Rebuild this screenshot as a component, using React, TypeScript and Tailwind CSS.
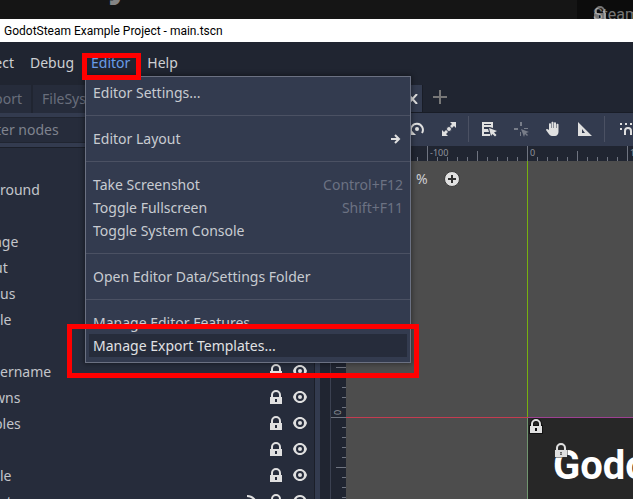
import React from "react";

type IconProps = { className?: string };

function LockIcon({ className = "" }: IconProps) {
  return (
    <svg viewBox="0 0 16 16" className={`size-4 shrink-0 ${className}`} fill="#e0e0e0" aria-hidden="true">
      <path fillRule="evenodd" d="M8 1a5 5 0 0 0-5 5v2H2v7h12V8h-1V6a5 5 0 0 0-5-5zm0 2a3 3 0 0 1 3 3v2H5V6a3 3 0 0 1 3-3zM7 10h2v3H7z" />
    </svg>
  );
}

function EyeIcon() {
  return (
    <svg viewBox="0 0 16 16" className="size-4 shrink-0" fill="#e0e0e0" aria-hidden="true">
      <path fillRule="evenodd" d="M8 2C4.500 2 2 4.500 1 8c1 3.500 3.500 6 7 6s6-2.500 7-6c-1-3.500-3.500-6-7-6zm0 2a4 4 0 1 1 0 8 4 4 0 0 1 0-8z" />
      <circle cx="8" cy="8" r="2" />
    </svg>
  );
}

function SignalIcon() {
  return (
    <svg viewBox="0 0 16 16" className="size-4 shrink-0" fill="none" stroke="#e0e0e0" strokeWidth="2" aria-hidden="true">
      <path d="M3 3a10 10 0 0 1 10 10M3 7a6 6 0 0 1 6 6" />
      <circle cx="4" cy="12" r="1" />
    </svg>
  );
}

function ToolIcon({ children, className = "" }: { children: React.ReactNode; className?: string }) {
  return (
    <svg viewBox="0 0 16 16" className={`size-4 shrink-0 ${className}`} fill="#e0e0e0" aria-hidden="true">
      {children}
    </svg>
  );
}

function ToolButton({ label, children }: { label: string; children: React.ReactNode }) {
  return (
    <button type="button" aria-label={label} className="flex h-full w-8 shrink-0 items-center justify-center">
      {children}
    </button>
  );
}

function ToolSeparator() {
  return (
    <div className="flex h-full w-2 shrink-0 py-[3px] pl-[3px]">
      <div className="w-px bg-[#4b5163]" />
    </div>
  );
}

type Entry = { label: string; shortcut?: string; submenu?: boolean; active?: boolean } | null;

const entries: Entry[] = [
  { label: "Editor Settings..." },
  null,
  { label: "Editor Layout", submenu: true },
  null,
  { label: "Take Screenshot", shortcut: "Control+F12" },
  { label: "Toggle Fullscreen", shortcut: "Shift+F11" },
  { label: "Toggle System Console" },
  null,
  { label: "Open Editor Data/Settings Folder" },
  null,
  { label: "Manage Editor Features..." },
  { label: "Manage Export Templates...", active: true },
];

function EditorPopup() {
  return (
    <div className="absolute top-[34px] left-0.5 z-20 w-[326px] border border-[#6b7182] bg-[#333b4f] pt-1 pb-[5px] shadow-[0_0_5px_1px_rgba(0,0,0,0.4)]">
      {entries.map((entry, i) =>
        entry ? (
          <div key={i} className="px-[3px]">
            <button
              type="button"
              className={`flex h-[23px] w-full items-center justify-between pr-1 pl-1 whitespace-nowrap ${
                entry.active ? "bg-[#262c3b] text-[#e0e1e4]" : "text-[#c8cbd1]"
              }`}
            >
              <span>{entry.label}</span>
              {entry.shortcut && <span className="text-[#6c7283]">{entry.shortcut}</span>}
              {entry.submenu && (
                <svg viewBox="0 0 16 16" className="size-4" fill="none" stroke="#e0e0e0" strokeWidth="2" aria-hidden="true">
                  <path d="M4 8h8M8 4l4 4-4 4" />
                </svg>
              )}
            </button>
          </div>
        ) : (
          <div key={i} className="flex h-[23px] items-center">
            <div className="h-px w-full bg-[#4b5163]" />
          </div>
        ),
      )}
      <div className="pointer-events-none absolute -right-[9px] -bottom-4 -left-[19px] h-[54px] border-[5px] border-[#ff0000]" />
    </div>
  );
}

function MenuBar() {
  return (
    <nav className="flex h-[42px] shrink-0 items-center gap-px bg-[#202531] text-[#cdcfd2]">
      <button type="button" className="flex w-[21px] justify-end overflow-hidden pr-[7px]">ect</button>
      <button type="button" className="px-2">Debug</button>
      <div className="relative flex h-full items-center">
        <button type="button" aria-expanded="true" className="px-2 text-[#699ce8]">Editor</button>
        <div className="pointer-events-none absolute top-[11px] -left-px z-30 h-[27px] w-[59px] border-[5px] border-[#ff0000]" />
        <EditorPopup />
      </div>
      <button type="button" className="px-2">Help</button>
    </nav>
  );
}

type Row = { label: string; cut?: boolean; signal?: boolean };

const rows: Row[] = [
  { label: "" },
  { label: "round" },
  { label: "" },
  { label: "age", cut: true },
  { label: "ut", cut: true },
  { label: "us" },
  { label: "le" },
  { label: "" },
  { label: "ername" },
  { label: "wns", cut: true },
  { label: "bles", cut: true },
  { label: "" },
  { label: "le" },
  { label: "st", signal: true },
];

function SceneDock() {
  return (
    <aside className="flex w-80 shrink-0 flex-col">
      <div className="flex h-[29px] shrink-0 gap-0.5 pt-px text-[#696e7b]">
        <button type="button" className="flex w-[31px] items-center justify-end overflow-hidden bg-[#262c3b] pr-[9px]">port</button>
        <button type="button" className="bg-[#262c3b] px-[9px]">FileSystem</button>
      </div>
      <div className="flex min-h-0 flex-1 flex-col gap-1 bg-[#333b4f] pt-1">
        <input
          type="text"
          aria-label="Filter nodes"
          placeholder="ter nodes"
          className="-indent-1 h-[26px] shrink-0 border-y border-[#202531] bg-[#262c3b] pb-0.5 outline-none placeholder:text-[#7f838e]"
        />
        <div className="mr-[5px] min-h-0 flex-1 overflow-hidden border-t border-r border-[#1b1f29] bg-[#262c3b] pt-0.5">
          {rows.map((row, i) => (
            <div key={i} className="flex h-[26px] items-center gap-2 pr-[6px]">
              <span className={`flex-1 pt-0.5 text-[#c3c5ca] ${row.cut ? "-ml-1.5" : ""}`}>{row.label}</span>
              {row.signal && <SignalIcon />}
              <button type="button" aria-label="Toggle lock"><LockIcon /></button>
              <button type="button" aria-label="Toggle visibility"><EyeIcon /></button>
            </div>
          ))}
        </div>
      </div>
    </aside>
  );
}

function Toolbar() {
  return (
    <div className="flex h-[33px] shrink-0 items-center overflow-hidden bg-[#333b4f] pb-px pl-[71px]">
      <ToolButton label="Rotate">
        <ToolIcon>
          <path d="M2.500 11.500A6 6 0 1 1 13 12" fill="none" stroke="#e0e0e0" strokeWidth="2" />
          <path d="M1 8v6h6z" />
          <circle cx="8" cy="8" r="2" />
        </ToolIcon>
      </ToolButton>
      <ToolButton label="Scale">
        <ToolIcon>
          <path d="M9 1h6v6l-2-2-2.500 2.500-2-2L11 3zM1 9l2 2 2.500-2.500 2 2L5 13l2 2H1z" />
          <circle cx="8" cy="8" r="2.500" stroke="#333b4f" />
        </ToolIcon>
      </ToolButton>
      <ToolSeparator />
      <ToolButton label="List select">
        <ToolIcon>
          <path fillRule="evenodd" d="M1 1h11v6l-3-1H3v2h4l1 3H3v2h6v2H1zM3 3v1h7V3z" />
          <path d="m8 7 8 3-3 1.500 2.500 2.500-1.500 1.500-2.500-2.500L10 15z" />
        </ToolIcon>
      </ToolButton>
      <ToolButton label="Pivot">
        <ToolIcon className="opacity-40">
          <path d="M7 1h2v4H7zM1 7h4v2H1zM11 7h4v1h-4zM7 11h1v4H7zM8 8l8 3-3 1 2 2-1 1-2-2-1 3z" />
        </ToolIcon>
      </ToolButton>
      <ToolButton label="Pan">
        <ToolIcon>
          <path d="M4 3c0-1 2-1 2 0v4h.500V1.500c0-1 2-1 2 0V7H9V2c0-1 2-1 2 0v5h.500V3.500c0-1 2-1 2 0V11c0 2-1.500 4-3.500 4H7c-1.500 0-2.500-1-3.500-2.500L1 9c0-1.500 1.500-1.500 3 0z" />
        </ToolIcon>
      </ToolButton>
      <ToolButton label="Ruler">
        <ToolIcon>
          <path fillRule="evenodd" d="M1 1v14h14zm4 7 3 4H5z" />
        </ToolIcon>
      </ToolButton>
      <ToolSeparator />
      <ToolButton label="Smart snap">
        <ToolIcon className="translate-x-0.5">
          <path d="M1 2h2v2H1zM6 2h2v2H6zM11 2h2v2h-2zM1 7h2v2H1z" />
          <path d="M6 14v-4a3 3 0 0 1 6 0v4" fill="none" stroke="#e0e0e0" strokeWidth="2" />
        </ToolIcon>
      </ToolButton>
    </div>
  );
}

const ticks = Array.from({ length: 200 }, (_, i) => i);

function HorizontalRuler() {
  return (
    <svg className="block h-[15px] w-full shrink-0 bg-[#202531]" aria-hidden="true">
      {ticks.map((i) => {
        const top = i % 10 === 9 ? 0 : i % 10 === 4 ? 5 : 11;
        return <rect key={i} x={i * 10 + 6} y={top} width="1" height={15 - top} fill="#6f7480" />;
      })}
      <g fill="#8f939c" fontSize="9" fontFamily="Noto Sans, sans-serif">
        <text x="99" y="10">-100</text>
        <text x="199" y="10">0</text>
        <text x="299" y="10">100</text>
      </g>
    </svg>
  );
}

function VerticalRuler() {
  return (
    <svg className="block h-full w-[15px] shrink-0 bg-[#202531]" aria-hidden="true">
      {ticks.map((i) => {
        const left = i % 10 === 5 ? 0 : i % 10 === 0 ? 5 : 11;
        return <rect key={i} x={left} y={i * 10 + 6} width={15 - left} height="1" fill="#6f7480" />;
      })}
      <text transform="translate(10 254) rotate(-90)" fill="#8f939c" fontSize="9" fontFamily="Noto Sans, sans-serif">0</text>
    </svg>
  );
}

function Canvas() {
  return (
    <div className="relative min-w-0 flex-1 overflow-hidden bg-[#4d4d4d]">
      <div className="absolute top-[7px] left-[70px] flex items-center gap-4 text-[#cdcfd2]">
        <span>%</span>
        <button type="button" aria-label="Zoom in">
          <svg viewBox="0 0 16 16" className="size-4" aria-hidden="true">
            <circle cx="8" cy="8" r="7.500" fill="#e0e0e0" stroke="#3b3b3b" />
            <path d="M8 4v8M4 8h8" stroke="#303030" strokeWidth="2" />
          </svg>
        </button>
      </div>
      <div className="absolute top-[257px] right-0 bottom-0 left-[182px] overflow-hidden bg-[#272727]">
        <h1 className="absolute top-6 left-[25px] font-[Roboto,sans-serif] text-[40px] leading-[48px] font-bold whitespace-nowrap text-white">
          GodotSteam
        </h1>
        <LockIcon className="absolute top-0 left-0 overflow-visible [paint-order:stroke] stroke-[#111111] stroke-2" />
        <LockIcon className="absolute top-6 left-[25px] overflow-visible [paint-order:stroke] stroke-[#333333]" />
      </div>
      <div className="absolute top-0 left-[181px] h-[257px] w-px bg-[#78b00f]" />
      <div className="absolute top-[257px] bottom-0 left-[181px] w-px bg-[#719570]" />
      <div className="absolute top-[256px] left-0 h-px w-[182px] bg-[#c43c51]" />
      <div className="absolute top-[256px] right-0 left-[182px] h-px bg-[#9e4193]" />
    </div>
  );
}

function MainView() {
  return (
    <main className="flex min-w-0 flex-1 flex-col">
      <div className="flex h-[29px] shrink-0 items-stretch border-b border-[#191d27]">
        <div className="mt-px flex w-[93px] items-center justify-end border-r border-[#191d27] bg-[#333b4f] pr-1">
          <button type="button" aria-label="Close scene">
            <svg viewBox="0 0 10 10" className="size-[10px]" fill="none" stroke="#e0e0e0" strokeWidth="2" aria-hidden="true">
              <path d="m0 0 9 10M9 0 4.500 5 0 10" />
            </svg>
          </button>
        </div>
        <button type="button" aria-label="Add scene" className="flex items-center pb-0.5 pl-[9px]">
          <svg viewBox="0 0 16 16" className="size-4" stroke="#777777" strokeWidth="2" aria-hidden="true">
            <path d="M8 1v14M1 8h14" />
          </svg>
        </button>
      </div>
      <Toolbar />
      <div className="flex min-h-0 flex-1 flex-col border-l border-[#3b4151]">
        <HorizontalRuler />
        <div className="flex min-h-0 flex-1">
          <VerticalRuler />
          <Canvas />
        </div>
      </div>
    </main>
  );
}

export default function App() {
  return (
    <div className="flex h-screen flex-col overflow-hidden bg-[#202531] font-['Noto_Sans',sans-serif] text-[14px] leading-[22px]">
      <header className="flex h-[19px] shrink-0 justify-between overflow-hidden bg-[#151515] font-[Roboto,sans-serif]">
        <div className="-mt-9 pl-[112px] text-[40px] leading-10 font-bold text-[#858585]">j</div>
        <div className="relative w-14 overflow-hidden bg-[#0c0c0c] pt-1 pl-4 text-[16px] whitespace-nowrap text-[#777777]">
          Steam
          <LockIcon className="absolute top-[5px] left-[15px] opacity-50" />
        </div>
      </header>
      <div className="flex h-[23px] shrink-0 items-center bg-white pl-1 font-[Roboto,sans-serif] text-[12px] whitespace-nowrap text-black">
        GodotSteam Example Project - main.tscn
      </div>
      <MenuBar />
      <div className="flex min-h-0 flex-1 gap-2.5">
        <SceneDock />
        <MainView />
      </div>
    </div>
  );
}
